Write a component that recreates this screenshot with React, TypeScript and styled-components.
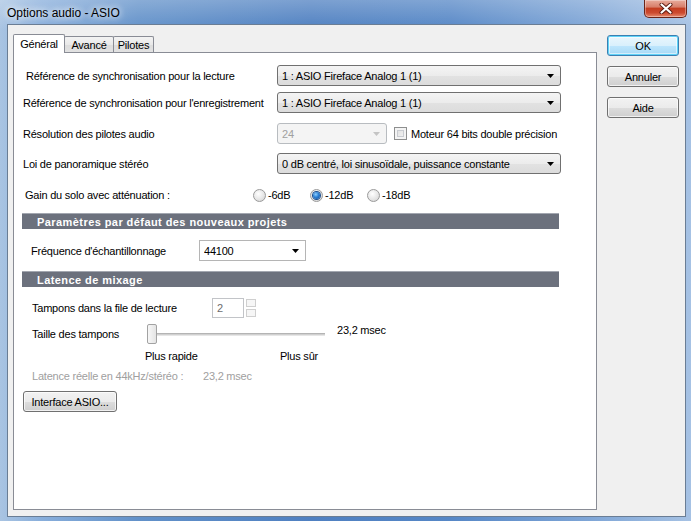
import React from "react";
import styled, { createGlobalStyle } from "styled-components";

const GlobalStyle = createGlobalStyle`
  html, body { margin: 0; padding: 0; background: #ffffff; }
  body {
    font-family: "Liberation Sans", Arial, sans-serif;
    font-size: 11px;
    letter-spacing: -0.22px;
    color: #000;
  }
  * { box-sizing: border-box; }
`;

const Window = styled.div`
  width: 691px;
  height: 521px;
  display: flex;
  flex-direction: column;
  overflow: hidden;
  background:
    linear-gradient(to bottom, rgba(255,255,255,0.25), rgba(255,255,255,0) 30px),
    linear-gradient(to right, #a9c4e2 0%, #88aedb 6%, #6291c9 20%, #4f80c1 45%, #5687c6 65%, #7ea5d6 85%, #a6c2e4 100%);
`;

const TitleBar = styled.div`
  height: 24px;
  display: flex;
  align-items: flex-start;
  padding: 0 4px 0 7px;
  flex-shrink: 0;
`;

const TitleText = styled.span`
  font-size: 12px;
  letter-spacing: 0;
  line-height: 14px;
  padding-top: 6px;
  color: #000;
  text-shadow: 0 0 6px #ffffff, 0 0 10px rgba(255,255,255,0.8);
`;

const CloseButton = styled.div`
  margin-left: auto;
  width: 43px;
  height: 18px;
  border: 1px solid #6a2418;
  border-top: none;
  border-radius: 0 0 5px 5px;
  background: linear-gradient(to bottom, #e8ab9c 0%, #d8806c 40%, #c43e22 50%, #cc4a2f 75%, #e58a6e 100%);
  box-shadow: inset 0 0 0 1px rgba(255,255,255,0.35);
  display: flex;
  align-items: center;
  justify-content: center;
`;

const Client = styled.div`
  flex: 1;
  margin: 0 5px 4px 7px;
  background: #f0f0f0;
  border: 1px solid #6a7d94;
  display: flex;
  gap: 10px;
  padding: 9px 6px 6px 5px;
`;

const TabArea = styled.div`
  width: 585px;
  display: flex;
  flex-direction: column;
`;

const TabStrip = styled.div`
  height: 18px;
  display: flex;
  align-items: flex-end;
  flex-shrink: 0;
`;

const Tab = styled.div<{ $active?: boolean; $w: number }>`
  width: ${(p) => p.$w}px;
  height: ${(p) => (p.$active ? 19 : 16)}px;
  margin-bottom: ${(p) => (p.$active ? -1 : 0)}px;
  margin-left: ${(p) => (p.$active ? 0 : -1)}px;
  position: relative;
  z-index: ${(p) => (p.$active ? 2 : 1)};
  border: 1px solid #898c95;
  border-bottom: none;
  border-radius: 2px 2px 0 0;
  background: ${(p) =>
    p.$active
      ? "#ffffff"
      : "linear-gradient(to bottom, #f3f3f3 0%, #e9e9e9 50%, #dcdcdc 51%, #e2e2e2 100%)"};
  display: flex;
  align-items: center;
  justify-content: center;
  padding-top: ${(p) => (p.$active ? 0 : 1)}px;
  &:first-child { margin-left: 0; }
`;

const Panel = styled.div`
  flex: 1;
  background: #ffffff;
  border: 1px solid #898c95;
  padding: 12px 0 0 9px;
  display: flex;
  flex-direction: column;
  position: relative;
  z-index: 1;
`;

const ButtonColumn = styled.div`
  width: 72px;
  display: flex;
  flex-direction: column;
  gap: 10px;
  padding-top: 1px;
`;

const PushButton = styled.button<{ $default?: boolean; $w?: number }>`
  width: ${(p) => (p.$w ? `${p.$w}px` : "100%")};
  height: 21px;
  padding: 0;
  font-family: inherit;
  font-size: 11px;
  letter-spacing: -0.22px;
  color: #000;
  border-radius: 3px;
  border: 1px solid ${(p) => (p.$default ? "#3c7fb1" : "#707070")};
  background: ${(p) =>
    p.$default
      ? "linear-gradient(to bottom, #eaf6fd 0%, #d9f0fc 50%, #bee6fd 51%, #a7d9f5 100%)"
      : "linear-gradient(to bottom, #f2f2f2 0%, #ebebeb 50%, #dddddd 51%, #cfcfcf 100%)"};
  box-shadow: ${(p) =>
    p.$default
      ? "inset 0 0 0 1px #5fd3f8, inset 0 0 0 2px rgba(255,255,255,0.5)"
      : "inset 0 0 0 1px rgba(255,255,255,0.7)"};
  flex-shrink: 0;
`;

const FieldRow = styled.div<{ $h: number; $mt?: number }>`
  display: flex;
  align-items: center;
  height: ${(p) => p.$h}px;
  margin-top: ${(p) => p.$mt ?? 0}px;
  flex-shrink: 0;
`;

const Label = styled.span<{ $w: number; $indent?: number; $muted?: boolean }>`
  width: ${(p) => p.$w}px;
  padding-left: ${(p) => p.$indent ?? 0}px;
  flex-shrink: 0;
  white-space: nowrap;
  color: ${(p) => (p.$muted ? "#a0a0a0" : "#000")};
`;

const Combo = styled.div<{ $w: number; $disabled?: boolean; $flat?: boolean }>`
  width: ${(p) => p.$w}px;
  height: 21px;
  display: flex;
  align-items: center;
  padding: 0 6px 0 4px;
  border-radius: ${(p) => (p.$flat ? 0 : 3)}px;
  border: 1px solid ${(p) => (p.$disabled ? "#b8bcc0" : p.$flat ? "#b5b5b5" : "#707070")};
  background: ${(p) =>
    p.$disabled
      ? "#f4f4f4"
      : p.$flat
      ? "#ffffff"
      : "linear-gradient(to bottom, #f4f4f4 0%, #ececec 50%, #e2e2e2 51%, #dcdcdc 100%)"};
  color: ${(p) => (p.$disabled ? "#a0a0a0" : "#000")};
  flex-shrink: 0;
`;

const ComboText = styled.span`
  flex: 1;
  white-space: nowrap;
  overflow: hidden;
`;

const Arrow = ({ color = "#000" }: { color?: string }) => (
  <svg width="7" height="4" viewBox="0 0 7 4">
    <polygon points="0,0 7,0 3.5,4" fill={color} />
  </svg>
);

const CheckBox = styled.span`
  width: 13px;
  height: 13px;
  border: 1px solid #8e8f8f;
  background: linear-gradient(135deg, #dcdcdc 0%, #f7f7f7 100%);
  box-shadow: inset 0 0 0 2px #f4f4f4, inset 0 0 0 3px #c9ccd1;
  margin-left: 7px;
  flex-shrink: 0;
`;

const CheckLabel = styled.span`
  margin-left: 4px;
  white-space: nowrap;
`;

const RadioItem = styled.label`
  width: 57px;
  display: flex;
  align-items: center;
  gap: 2px;
  flex-shrink: 0;
`;

const RadioCircle = styled.span<{ $checked?: boolean }>`
  width: 13px;
  height: 13px;
  border-radius: 50%;
  border: 1px solid #9a9a9a;
  background: radial-gradient(circle at 40% 35%, #ffffff 0%, #e6e6e6 55%, #cfcfcf 100%);
  display: flex;
  align-items: center;
  justify-content: center;
  flex-shrink: 0;
  &::after {
    content: "";
    display: ${(p) => (p.$checked ? "block" : "none")};
    width: 7px;
    height: 7px;
    border-radius: 50%;
    background: radial-gradient(circle at 40% 35%, #8fd0ff 0%, #2a7fd4 45%, #0c4b9a 100%);
    box-shadow: 0 0 0 1px #1b4f8f;
  }
`;

const SectionHeader = styled.div`
  width: 537px;
  height: 16px;
  margin-left: -1px;
  background: #6c717d;
  border-top: 1px solid #a3a7b0;
  color: #ffffff;
  font-weight: bold;
  letter-spacing: 0.43px;
  padding-left: 15px;
  display: flex;
  align-items: center;
  flex-shrink: 0;
`;

const SpinField = styled.div`
  width: 32px;
  height: 20px;
  border: 1px solid #c2c4c8;
  background: #ffffff;
  color: #6d6d6d;
  padding-left: 4px;
  display: flex;
  align-items: center;
  flex-shrink: 0;
`;

const SpinButtons = styled.div`
  width: 10px;
  height: 20px;
  margin-left: 2px;
  display: flex;
  flex-direction: column;
  gap: 2px;
  padding: 1px 0;
`;

const SpinPart = styled.span`
  flex: 1;
  border: 1px solid #cfcfcf;
  background: #f6f6f6;
`;

const SliderThumb = styled.span`
  width: 10px;
  height: 20px;
  border: 1px solid #a2a2a2;
  border-radius: 2px;
  background: linear-gradient(to right, #f7f7f7, #e4e4e4);
  flex-shrink: 0;
`;

const SliderTrack = styled.span`
  width: 168px;
  height: 3px;
  border-top: 1px solid #b4b4b4;
  border-bottom: 1px solid #e6e6e6;
  background: #d0d0d0;
  flex-shrink: 0;
`;

const SliderValue = styled.span`
  margin-left: 12px;
  align-self: flex-start;
  line-height: 12px;
  margin-top: 0px;
  white-space: nowrap;
`;

const TickLabel = styled.span<{ $w?: number }>`
  width: ${(p) => (p.$w ? `${p.$w}px` : "auto")};
  flex-shrink: 0;
  white-space: nowrap;
`;

const TickRow = styled(FieldRow)`
  padding-left: 122px;
`;

const MutedValue = styled.span`
  color: #a0a0a0;
  white-space: nowrap;
`;

const CloseGlyph = () => (
  <svg width="14" height="11" viewBox="0 0 14 11">
    <path d="M2.5 1.5 L11.5 9.5 M11.5 1.5 L2.5 9.5" stroke="#5a1a10" strokeWidth="4" strokeLinecap="round" />
    <path d="M2.5 1.5 L11.5 9.5 M11.5 1.5 L2.5 9.5" stroke="#ffffff" strokeWidth="2.2" strokeLinecap="round" />
  </svg>
);

export default function App() {
  return (
    <>
      <GlobalStyle />
      <Window>
        <TitleBar>
          <TitleText>Options audio - ASIO</TitleText>
          <CloseButton>
            <CloseGlyph />
          </CloseButton>
        </TitleBar>
        <Client>
          <TabArea>
            <TabStrip>
              <Tab $active $w={52}>Général</Tab>
              <Tab $w={50}>Avancé</Tab>
              <Tab $w={41}>Pilotes</Tab>
            </TabStrip>
            <Panel>
              <FieldRow $h={21}>
                <Label $w={254} $indent={3}>Référence de synchronisation pour la lecture</Label>
                <Combo $w={284}>
                  <ComboText>1 : ASIO Fireface Analog 1 (1)</ComboText>
                  <Arrow />
                </Combo>
              </FieldRow>
              <FieldRow $h={21} $mt={6}>
                <Label $w={254}>Référence de synchronisation pour l'enregistrement</Label>
                <Combo $w={284}>
                  <ComboText>1 : ASIO Fireface Analog 1 (1)</ComboText>
                  <Arrow />
                </Combo>
              </FieldRow>
              <FieldRow $h={21} $mt={10}>
                <Label $w={254}>Résolution des pilotes audio</Label>
                <Combo $w={110} $disabled>
                  <ComboText>24</ComboText>
                  <Arrow color="#c4c4c4" />
                </Combo>
                <CheckBox />
                <CheckLabel>Moteur 64 bits double précision</CheckLabel>
              </FieldRow>
              <FieldRow $h={21} $mt={9}>
                <Label $w={254}>Loi de panoramique stéréo</Label>
                <Combo $w={284}>
                  <ComboText>0 dB centré, loi sinusoïdale, puissance constante</ComboText>
                  <Arrow />
                </Combo>
              </FieldRow>
              <FieldRow $h={20} $mt={11}>
                <Label $w={230} $indent={2}>Gain du solo avec atténuation :</Label>
                <RadioItem>
                  <RadioCircle />
                  -6dB
                </RadioItem>
                <RadioItem>
                  <RadioCircle $checked />
                  -12dB
                </RadioItem>
                <RadioItem>
                  <RadioCircle />
                  -18dB
                </RadioItem>
              </FieldRow>
              <SectionHeader style={{ marginTop: 8 }}>Paramètres par défaut des nouveaux projets</SectionHeader>
              <FieldRow $h={21} $mt={11}>
                <Label $w={176} $indent={8}>Fréquence d'échantillonnage</Label>
                <Combo $w={107} $flat>
                  <ComboText>44100</ComboText>
                  <Arrow />
                </Combo>
              </FieldRow>
              <SectionHeader style={{ marginTop: 10 }}>Latence de mixage</SectionHeader>
              <FieldRow $h={20} $mt={11}>
                <Label $w={189} $indent={9}>Tampons dans la file de lecture</Label>
                <SpinField>2</SpinField>
                <SpinButtons>
                  <SpinPart />
                  <SpinPart />
                </SpinButtons>
              </FieldRow>
              <FieldRow $h={20} $mt={6}>
                <Label $w={124} $indent={9}>Taille des tampons</Label>
                <SliderThumb />
                <SliderTrack />
                <SliderValue>23,2 msec</SliderValue>
              </FieldRow>
              <TickRow $h={14} $mt={5}>
                <TickLabel $w={135}>Plus rapide</TickLabel>
                <TickLabel>Plus sûr</TickLabel>
              </TickRow>
              <FieldRow $h={14} $mt={6}>
                <Label $w={180} $indent={9} $muted>Latence réelle en 44kHz/stéréo :</Label>
                <MutedValue>23,2 msec</MutedValue>
              </FieldRow>
              <FieldRow $h={21} $mt={8}>
                <PushButton $w={94}>Interface ASIO...</PushButton>
              </FieldRow>
            </Panel>
          </TabArea>
          <ButtonColumn>
            <PushButton $default>OK</PushButton>
            <PushButton>Annuler</PushButton>
            <PushButton>Aide</PushButton>
          </ButtonColumn>
        </Client>
      </Window>
    </>
  );
}
